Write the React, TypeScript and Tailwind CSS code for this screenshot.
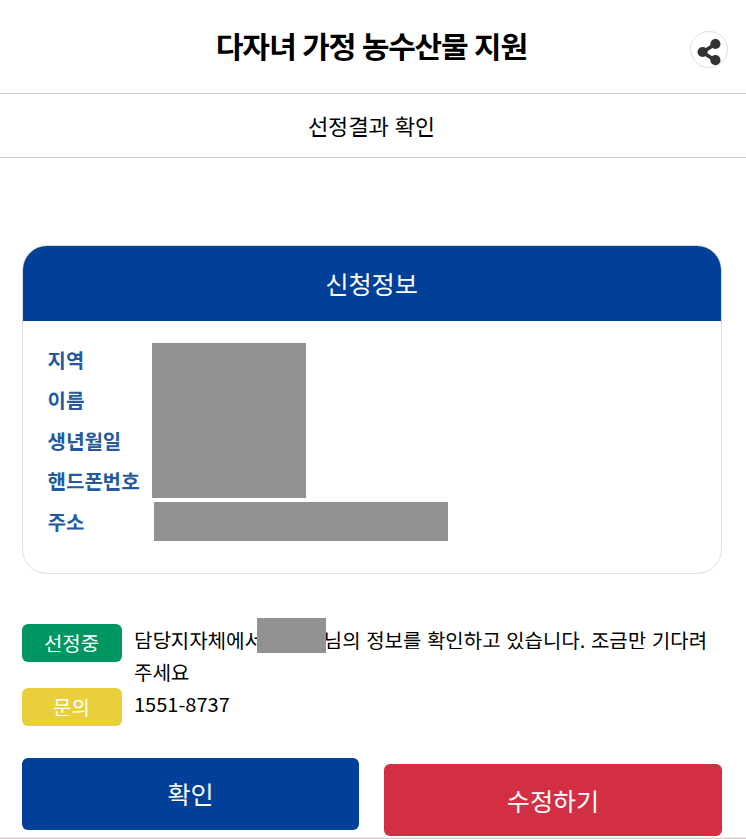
import React from 'react';

const infoLabels = ['지역', '이름', '생년월일', '핸드폰번호', '주소'];

const ShareIcon: React.FC = () => (
  <svg width="24" height="27" viewBox="0 0 24 27" fill="#333" stroke="#333">
    <path d="M18 5.3 5.5 13.2 18 21.2" fill="none" strokeWidth="3.6" />
    <circle cx="18.4" cy="5" r="5.1" stroke="none" />
    <circle cx="5.6" cy="13" r="5.1" stroke="none" />
    <circle cx="18.4" cy="21.2" r="5.1" stroke="none" />
  </svg>
);

const Header: React.FC = () => (
  <header className="relative h-[94px] border-b border-[#ccc]">
    <h1 className="pt-[23px] pr-[3px] text-center text-[30px] leading-[44px] font-bold tracking-[-1.2px] [word-spacing:1.2px]">
      다자녀 가정 농수산물 지원
    </h1>
    <button
      aria-label="공유"
      className="absolute top-[31px] right-[18px] flex h-[37px] w-[38px] items-center justify-center rounded-full border border-[#ddd] bg-white pt-[5px]"
    >
      <ShareIcon />
    </button>
  </header>
);

const InfoCard: React.FC = () => (
  <section className="mx-[22px] mt-[87px] h-[329px] w-[700px] overflow-hidden rounded-[25px] border border-[#ddd]">
    <h3 className="h-[75px] bg-[#004098] pr-px text-center text-[25px] leading-[74px] text-white">신청정보</h3>
    <div className="flex pl-[24.6px]">
      <ul className="w-[104.4px] shrink-0 pt-[18.5px] text-[20px] font-bold text-[#245a9c]">
        {infoLabels.map((label) => (
          <li key={label} className="h-[40.5px] leading-[40px] whitespace-nowrap">
            {label}
          </li>
        ))}
      </ul>
      {/* masked personal data */}
      <div className="pt-[22px]">
        <div className="h-[155px] w-[154px] bg-[#929292]" />
        <div className="mt-[4px] ml-[2px] h-[39px] w-[294px] bg-[#929292]" />
      </div>
    </div>
  </section>
);

const StatusSection: React.FC = () => (
  <section className="mx-[22px] mt-[50px] text-[20px] leading-[32px]">
    <div className="flex h-[64px] gap-[12px]">
      <span className="h-[38px] w-[100px] shrink-0 rounded-[6px] bg-[#009661] pr-px text-center leading-[38px] text-white">
        선정중
      </span>
      <p className="whitespace-nowrap [word-spacing:1.1px]">
        담당지자체에서
        <span className="relative inline-block w-[61px]">
          <span className="absolute -top-[30px] -left-[6px] h-[35px] w-[69px] bg-[#929292]" />
        </span>
        님의 정보를 확인하고 있습니다. 조금만 기다려
        <br />
        주세요
      </p>
    </div>
    <div className="flex h-[38px] gap-[12px]">
      <span className="w-[100px] shrink-0 rounded-[6px] bg-[#e8cf3b] pr-px text-center leading-[38px] text-white">
        문의
      </span>
      <p>1551-8737</p>
    </div>
  </section>
);

export default function App() {
  return (
    <div className="flex h-[839px] w-[746px] flex-col overflow-hidden bg-white font-['Noto_Sans_KR','Noto_Sans_CJK_KR',sans-serif] text-black">
      <Header />
      <h2 className="h-[64px] border-b border-[#ccc] pr-[3px] text-center text-[22px] leading-[62px] [word-spacing:1.2px]">
        선정결과 확인
      </h2>
      <InfoCard />
      <StatusSection />
      <div className="mx-[22px] mt-[32px] flex gap-[25px] text-[25px] leading-[70px] text-white">
        <button className="h-[72px] w-[337px] rounded-[6px] bg-[#004098] pb-[2px]">확인</button>
        <button className="mt-[6px] h-[72px] w-[338px] rounded-[6px] bg-[#d22f45]">수정하기</button>
      </div>
      <div className="mt-px h-[2px] shrink-0 border-t border-[#f3eaea] bg-[#ddc9c9]" />
    </div>
  );
}
